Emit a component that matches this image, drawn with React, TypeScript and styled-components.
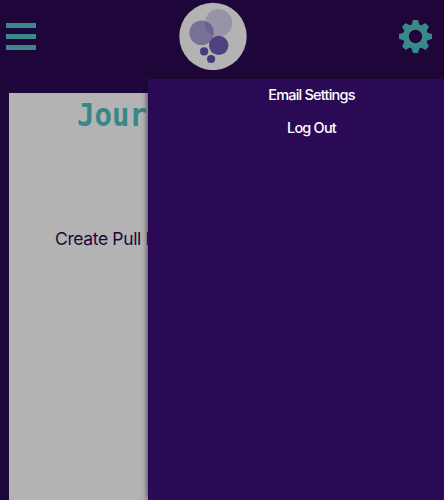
import React from "react";
import styled, { createGlobalStyle } from "styled-components";

const GlobalStyle = createGlobalStyle`
  * { box-sizing: border-box; }
  html, body { margin: 0; height: 100%; overflow: hidden; background: #1e073a; }
`;

const Page = styled.div`
  position: relative;
  height: 500px;
  width: 100%;
  overflow: hidden;
  display: flex;
  flex-direction: column;
  background: #1e073a;
  font-family: Inter, sans-serif;
`;

const Header = styled.header`
  flex: 0 0 78px;
  display: grid;
  grid-template-columns: 173px 68px 1fr;
  align-items: start;
  padding: 2px 12px 0 6px;
  background: #1e063b;
`;

const IconButton = styled.button<{ $side: "start" | "end" }>`
  justify-self: ${(p) => p.$side};
  margin: ${(p) => (p.$side === "start" ? "21px" : "18px")} 0 0;
  padding: 0;
  border: 0;
  background: none;
  color: #3c8789;
  line-height: 0;
`;

const MenuBars = styled.span`
  display: flex;
  flex-direction: column;
  gap: 6px;
  width: 30px;
`;

const Bar = styled.span`
  height: 5px;
  background: currentColor;
`;

const Journal = styled.main`
  flex: 1;
  margin: 15px 9px 0;
  background: #b3b3b3;
`;

const Title = styled.h1`
  margin: 0;
  padding: 3px 0 0 68px;
  font: 700 29px/40px "DejaVu Sans Mono", monospace;
  white-space: nowrap;
  color: #398687;
  transform: scaleY(1.08);
  transform-origin: 0 34px;
`;

const Task = styled.p`
  margin: 92px 0 0 46px;
  font-size: 17.5px;
  line-height: 22px;
  letter-spacing: -0.37px;
  white-space: nowrap;
  color: #1f073c;
`;

const Drawer = styled.nav`
  position: absolute;
  inset: 79px 0 0 148px;
  display: flex;
  flex-direction: column;
  align-items: center;
  gap: 13px;
  padding: 6px 0 0 31px;
  background: #2b0a55;
  box-shadow: 0 0 6px rgba(20, 15, 28, 0.85);
`;

const DrawerLink = styled.a`
  font-size: 14.5px;
  line-height: 20px;
  font-weight: 500;
  letter-spacing: -0.8px;
  color: #fff;
`;

function Logo() {
  return (
    <svg width="68" height="68" viewBox="179 2 68 68" aria-label="Logo">
      <circle cx="213" cy="36.4" r="33.7" fill="#b3b3b3" />
      <circle cx="218.5" cy="23" r="13.7" fill="#473980" fillOpacity=".25" />
      <circle cx="201.6" cy="32.7" r="12.3" fill="#473980" fillOpacity=".55" />
      <circle cx="218.7" cy="45.4" r="9.7" fill="#4f427f" />
      <circle cx="204.1" cy="51.4" r="4.1" fill="#473980" />
      <circle cx="211.1" cy="59" r="4.1" fill="#473980" />
    </svg>
  );
}

const TOOTH_ANGLES = [0, 45, 90, 135, 180, 225, 270, 315];

function Gear() {
  return (
    <svg width="33" height="33" viewBox="-16.5 -16.5 33 33" fill="currentColor" aria-hidden="true">
      <circle r="9.5" fill="none" stroke="currentColor" strokeWidth="5.6" />
      {TOOTH_ANGLES.map((angle) => (
        <path
          key={angle}
          transform={`rotate(${angle})`}
          d="M-5.2-10.5Q-3.5-12-3.1-14.5L-2.8-15.7Q-2.6-16.5-1.8-16.5H1.8Q2.6-16.5 2.8-15.7L3.1-14.5Q3.5-12 5.2-10.5Z"
        />
      ))}
    </svg>
  );
}

export default function App() {
  return (
    <>
      <GlobalStyle />
      <Page>
        <Header>
          <IconButton $side="start" aria-label="Menu">
            <MenuBars>
              <Bar />
              <Bar />
              <Bar />
            </MenuBars>
          </IconButton>
          <Logo />
          <IconButton $side="end" aria-label="Settings">
            <Gear />
          </IconButton>
        </Header>
        <Journal>
          <Title>Jour</Title>
          <Task>Create Pull R</Task>
        </Journal>
        <Drawer>
          <DrawerLink>Email Settings</DrawerLink>
          <DrawerLink>Log Out</DrawerLink>
        </Drawer>
      </Page>
    </>
  );
}
